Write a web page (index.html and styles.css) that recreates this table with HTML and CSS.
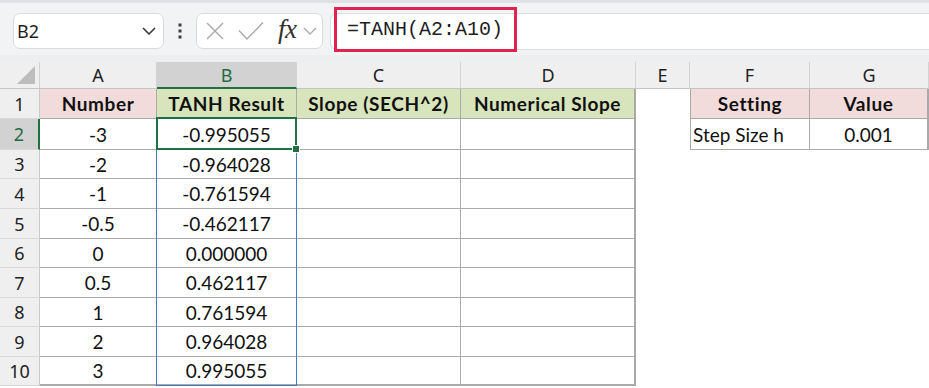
FILE: index.html
```html
<!DOCTYPE html>
<html lang="en">
<head>
<meta charset="utf-8">
<title>TANH sheet</title>
<link rel="stylesheet" href="styles.css">
</head>
<body>
<div class="app">
  <div class="toolbar">
    <div class="namebox">
      <span class="name">B2</span>
      <svg class="chev" width="14" height="8" viewBox="0 0 14 8"><polyline points="1,1 7,7 13,1" fill="none" stroke="#3a3a3a" stroke-width="1.6"/></svg>
    </div>
    <div class="dots">
      <svg width="4" height="16" viewBox="0 0 4 16"><rect x="0.5" y="0.5" width="3" height="3" fill="#3c3c3c"/><rect x="0.5" y="6.5" width="3" height="3" fill="#3c3c3c"/><rect x="0.5" y="12.5" width="3" height="3" fill="#3c3c3c"/></svg>
    </div>
    <div class="fnbox">
      <svg class="ico-x" width="20" height="20" viewBox="0 0 20 20"><path d="M2 2 L18 18 M18 2 L2 18" stroke="#a9a9a9" stroke-width="1.4" fill="none"/></svg>
      <svg class="ico-ok" width="26" height="20" viewBox="0 0 26 20"><polyline points="1,9.5 9,18 25,1.5" stroke="#a9a9a9" stroke-width="1.4" fill="none"/></svg>
      <span class="fx">fx</span>
      <svg class="chev2" width="14" height="8" viewBox="0 0 14 8"><polyline points="1,1 7,7 13,1" fill="none" stroke="#ababab" stroke-width="1.4"/></svg>
    </div>
    <div class="formula">
      <span class="hl">=TANH(A2:A10)</span>
    </div>
  </div>
  <div class="gap"></div>
  <div class="sheet">
    <div class="corner"><span class="tri"></span></div>
    <div class="ch">A</div>
    <div class="ch sel">B</div>
    <div class="ch">C</div>
    <div class="ch">D</div>
    <div class="ch">E</div>
    <div class="ch">F</div>
    <div class="ch">G</div>

    <div class="rh">1</div>
    <div class="c t b pink">Number</div>
    <div class="c t b green">TANH Result</div>
    <div class="c t b green">Slope (SECH^2)</div>
    <div class="c t b green edge">Numerical Slope</div>
    <div class="c"></div>
    <div class="c t b pink fl">Setting</div>
    <div class="c t b pink edge">Value</div>

    <div class="rh sel">2</div>
    <div class="c t">-3</div>
    <div class="c t">-0.995055</div>
    <div class="c t"></div>
    <div class="c t edge"></div>
    <div class="c"></div>
    <div class="c t fl left">Step Size h</div>
    <div class="c t edge">0.001</div>

    <div class="rh">3</div>
    <div class="c t">-2</div>
    <div class="c t">-0.964028</div>
    <div class="c t"></div>
    <div class="c t edge"></div>
    <div class="c"></div><div class="c"></div><div class="c"></div>

    <div class="rh">4</div>
    <div class="c t">-1</div>
    <div class="c t">-0.761594</div>
    <div class="c t"></div>
    <div class="c t edge"></div>
    <div class="c"></div><div class="c"></div><div class="c"></div>

    <div class="rh">5</div>
    <div class="c t">-0.5</div>
    <div class="c t">-0.462117</div>
    <div class="c t"></div>
    <div class="c t edge"></div>
    <div class="c"></div><div class="c"></div><div class="c"></div>

    <div class="rh">6</div>
    <div class="c t">0</div>
    <div class="c t">0.000000</div>
    <div class="c t"></div>
    <div class="c t edge"></div>
    <div class="c"></div><div class="c"></div><div class="c"></div>

    <div class="rh">7</div>
    <div class="c t">0.5</div>
    <div class="c t">0.462117</div>
    <div class="c t"></div>
    <div class="c t edge"></div>
    <div class="c"></div><div class="c"></div><div class="c"></div>

    <div class="rh">8</div>
    <div class="c t">1</div>
    <div class="c t">0.761594</div>
    <div class="c t"></div>
    <div class="c t edge"></div>
    <div class="c"></div><div class="c"></div><div class="c"></div>

    <div class="rh">9</div>
    <div class="c t">2</div>
    <div class="c t">0.964028</div>
    <div class="c t"></div>
    <div class="c t edge"></div>
    <div class="c"></div><div class="c"></div><div class="c"></div>

    <div class="rh">10</div>
    <div class="c t last">3</div>
    <div class="c t last">0.995055</div>
    <div class="c t last"></div>
    <div class="c t edge last"></div>
    <div class="c"></div><div class="c"></div><div class="c"></div>

    <div class="range"></div>
    <div class="active"><span class="handle"></span></div>
  </div>
</div>
</body>
</html>
```

FILE: styles.css
```css
* { box-sizing: border-box; }
html, body { margin: 0; padding: 0; background: #ffffff; }
body { width: 929px; height: 388px; overflow: hidden; font-family: "Lato", "Liberation Sans", sans-serif; }

.app { width: 929px; }

.toolbar {
  height: 55px;
  background: #f1f3f5;
  border-top: 3px solid #dfe1e4;
  display: flex;
  align-items: flex-start;
  padding-top: 10px;
}
.namebox {
  margin-left: 13px;
  width: 151px;
  height: 36px;
  background: #fff;
  border: 1px solid #d9dbde;
  border-radius: 7px;
  display: flex;
  align-items: center;
  justify-content: space-between;
  padding: 0 7px 0 3px;
}
.name { font-family: "Noto Sans", "Open Sans", sans-serif; font-size: 18px; color: #1f1f1f; }
.chev { display: block; }
.dots { width: 32px; height: 36px; display: flex; align-items: center; justify-content: center; }
.dots svg { display: block; }
.fnbox {
  width: 127px;
  height: 36px;
  background: #fff;
  border: 1px solid #d9dbde;
  border-radius: 7px;
  display: flex;
  align-items: center;
  padding-left: 8px;
}
.ico-x { display: block; margin-right: 13px; }
.ico-ok { display: block; margin-right: 14px; }
.fx {
  font-family: "Liberation Serif", "DejaVu Serif", serif;
  font-style: italic;
  font-size: 27px;
  color: #303030;
  line-height: 1;
  margin-top: -4px;
  letter-spacing: -0.5px;
}
.chev2 { display: block; margin-left: 6px; }
.formula {
  margin-left: 7px;
  flex: 1;
  height: 37px;
  background: #fff;
  border: 1px solid #dcdee1;
  border-right: none;
  border-radius: 7px 0 0 7px;
  display: flex;
  align-items: flex-start;
}
.hl {
  margin-top: -7px;
  margin-left: 3px;
  width: 183px;
  height: 45px;
  border: 3px solid #e0234e;
  padding-left: 10px;
  display: flex;
  align-items: center;
  font-family: "Liberation Mono", "DejaVu Sans Mono", monospace;
  font-size: 20px;
  color: #1e1e1e;
}
.gap { height: 7px; background: #eceef0; }

.sheet {
  position: relative;
  display: grid;
  grid-template-columns: 40px 117px 140px 164px 175px 54px 120px 119px;
  grid-template-rows: 27px 30px 31px 29px 30px 30px 29px 30px 29px 30px 29px;
  background: #fff;
}
.corner {
  background: #efefef;
  border-right: 1px solid #d0d0d0;
  border-bottom: 1px solid #c4c4c4;
  position: relative;
}
.tri {
  position: absolute;
  right: 4px;
  bottom: 4px;
  width: 0; height: 0;
  border-left: 18px solid transparent;
  border-bottom: 18px solid #bdbdbd;
}
.ch {
  background: #efefef;
  border-right: 1px solid #d3d3d3;
  border-bottom: 1px solid #c4c4c4;
  display: flex;
  align-items: center;
  justify-content: center;
  font-family: "Noto Sans", "Open Sans", sans-serif;
  font-size: 18px;
  color: #222;
}
.ch.sel {
  background: #d2d2d2;
  color: #1d6b3f;
  border-bottom: 2px solid #1f7145;
}
.rh {
  background: #efefef;
  border-right: 1px solid #c9c9c9;
  border-bottom: 1px solid #d8d8d8;
  display: flex;
  align-items: center;
  justify-content: center;
  font-family: "Noto Sans", "Open Sans", sans-serif;
  font-size: 18px;
  color: #222;
}
.rh.sel {
  background: #d2d2d2;
  color: #1d6b3f;
  border-right: 2px solid #1f7145;
}
.c {
  display: flex;
  align-items: center;
  justify-content: center;
  font-size: 19px;
  color: #111;
  white-space: nowrap;
}
.t {
  border-right: 1px solid #ababab;
  border-bottom: 1px solid #ababab;
}
.t.edge { border-right: 2px solid #a9a9a9; }
.t.last { border-bottom: 2px solid #a9a9a9; }
.t.fl { border-left: 1px solid #ababab; }
.b { font-weight: 700; letter-spacing: 0.6px; }
.pink { background: #f2dcdb; }
.green { background: #d8e4bc; }
.left { justify-content: flex-start; padding-left: 2px; }

.range {
  position: absolute;
  grid-column: 3 / 4;
  grid-row: 3 / 12;
  top: -1px;
  left: -1px;
  right: 0;
  bottom: 0;
  border: 1px solid #4a76c2;
  pointer-events: none;
}
.active {
  position: absolute;
  grid-column: 3 / 4;
  grid-row: 3 / 4;
  top: -2px;
  left: -1px;
  right: 0;
  bottom: 0;
  border: 2px solid #1f7145;
  pointer-events: none;
}
.handle {
  position: absolute;
  right: -5px;
  bottom: -5px;
  width: 8px;
  height: 8px;
  background: #1f7145;
  border: 1px solid #fff;
}
```
